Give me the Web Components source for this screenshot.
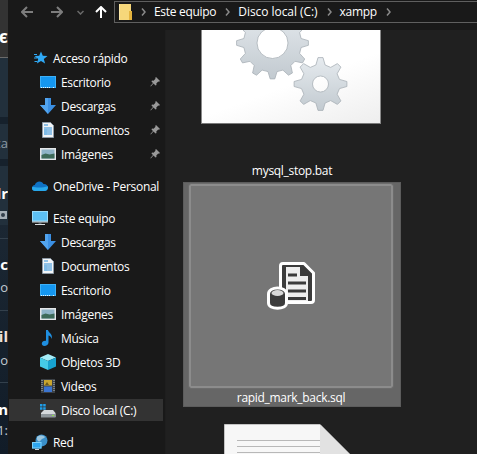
<!DOCTYPE html>
<html>
<head>
<meta charset="utf-8">
<title>xampp</title>
<style>
    html, body { margin: 0; height: 454px; overflow: hidden; background: #191919; }
    body { display: flex; font: 12px "Open Sans", "Noto Sans", sans-serif; letter-spacing: -.3px; color: #fff; }
</style>
</head>
<body>
<back-strip></back-strip>
<explorer-window>
    <nav-toolbar slot="top"></nav-toolbar>
    <side-nav slot="side"></side-nav>
    <file-pane slot="main"></file-pane>
</explorer-window>
<script>
const icons = {
    star: `<path d="M9 1.500l1.800 4.300 4.700.3-3.700 2.900 1.300 4.500L9 10.900l-4.100 2.600 1.300-4.500L2.500 6.100l4.700-.3z" fill="#2fa9f5"/><path d="M2 4.500h3M2 8h3M2.500 11.500h3" stroke="#2fa9f5" stroke-width="1.200"/>`,
    desktop: `<rect x="0" y="2" width="16" height="12" fill="#1597f0"/><rect x="0.500" y="2.500" width="15" height="11" fill="none" stroke="#3cb0f8"/><path d="M1 13.500h9M13 13.500h2" stroke="#e6f4ff" stroke-dasharray="1 1"/>`,
    download: `<path d="M5 0h6v7h5l-8 9-8-9h5z" fill="#3b8fe2"/><path d="M5 0h3v16l-8-9h5z" fill="#52a4ee"/>`,
    docs: `<path d="M2.500 0.500h8l3 3v12h-11z" fill="#f2f4f6" stroke="#8d9aa6"/><path d="M4 3h4M4 6h8M4 8h8M4 10h8M4 12h8" stroke="#2f8fd8"/><path d="M4 7h3v6H4z" fill="#7fbbe6"/>`,
    images: `<rect x="0" y="2" width="16" height="12" fill="#e4e6e8"/><rect x="1.500" y="3.500" width="13" height="9" fill="#8fb3c6"/><path d="M1.500 9l4-1.500 4 1 5-1v5h-13z" fill="#3e6a58"/>`,
    cloud: `<path d="M3.500 13C1.500 13 0 11.700 0 10c0-1.600 1.200-2.800 2.800-3C3.500 5 5.300 3.500 7.500 3.500c1.800 0 3.300.9 4 2.400 2.400-.2 4.500 1.500 4.500 3.700 0 1.900-1.500 3.400-3.500 3.400z" fill="#0f72c4"/><path d="M3 13c-1.700 0-3-1.100-3-2.800 0-.6.2-1 .4-1.400 1.500.5 4 .7 6.600.7 3.500 0 6.500-.5 8.700-1.300.2.400.3.900.3 1.400 0 1.900-1.500 3.400-3.500 3.400z" fill="#28a8ea"/>`,
    pc: `<rect x="0" y="1" width="16" height="10.500" fill="#5cc0f4"/><rect x="0.500" y="1.500" width="15" height="9.500" fill="none" stroke="#9adcfa"/><path d="M0 12h16" stroke="#d8dde0"/><path d="M6.500 12.500h3v1h-3z" fill="#8d9aa6"/><path d="M3 14.500h10" stroke="#d8dde0"/>`,
    music: `<path d="M6 0h2c.3 2.800 5 3.800 3.800 9-.5-2.200-2.300-3.200-3.300-3.400V12.500C8.500 14.700 6.500 16 4.300 16 2.800 16 1.800 15 1.800 13.600c0-1.900 2-3.200 4.200-2.800z" fill="#1f8fe0"/>`,
    cube: `<path d="M8 0l8 3.500L8 7 0 3.500z" fill="#a5ecf7"/><path d="M0 3.500L8 7v9l-8-3.500z" fill="#45cbe8"/><path d="M16 3.500L8 7v9l8-3.500z" fill="#17a2cf"/>`,
    video: `<rect x="1" y="1" width="14" height="14" fill="#3b4045"/><path d="M2 2v12M14 2v12" stroke="#b9bfc4" stroke-dasharray="1 1"/><rect x="4" y="2" width="8" height="5.500" fill="#c9a52e"/><rect x="4" y="8.500" width="8" height="5.500" fill="#3b74d0"/><path d="M5 7l2-3 2 3z" fill="#6a5a20"/>`,
    drive: `<path d="M0 2h2.500v2.500H0zM3.200 2h2.500v2.500H3.200zM0 5.200h2.500v2.500H0zM3.200 5.200h2.500v2.500H3.200z" fill="#1f9de8"/><path d="M4 8h9l2.500 3v4H1v-4z" fill="#d4d8db"/><path d="M1 12h14.500v3.500H1z" fill="#8f979c"/><path d="M12 13h2v1h-2z" fill="#8fe04a"/>`,
    network: `<circle cx="9.500" cy="6.500" r="6" fill="#3a8fc8"/><path d="M5 3c2-2 6-2 8 0-1 2-3 1-4 3s-3 2-4-.500z" fill="#9cc6de"/><rect x="0" y="8" width="9.500" height="6.500" fill="#2ea6f0"/><rect x="0.500" y="8.500" width="8.500" height="5.500" fill="none" stroke="#7fd0f8"/><path d="M3 15.500h4" stroke="#c8d0d6"/>`
}

class NavIcon extends HTMLElement {
    constructor() {
        super()
        const shadow = this.attachShadow({ mode: 'open' })
        shadow.innerHTML = `
        <style>
            :host { display: block; width: 16px; height: 16px; flex: none; }
            svg { display: block; }
        </style>
        <svg width="16" height="16" viewBox="0 0 16 16">${icons[this.getAttribute('name')]}</svg>`
    }
}
customElements.define('nav-icon', NavIcon)

class BackStrip extends HTMLElement {
    constructor() {
        super()
        const shadow = this.attachShadow({ mode: 'open' })
        shadow.innerHTML = `
        <style>
            :host { display: flex; flex-direction: column; width: 8px; height: 454px; flex: none; overflow: hidden; background: linear-gradient(#1d2935 40%, #111c28); font-family: "Open Sans", sans-serif; letter-spacing: 0; }
            div { display: flex; justify-content: flex-end; white-space: nowrap; overflow: hidden; flex: none; }
            .head { height: 58px; background: #333; border-bottom: 1px solid #6a6a6a; font-size: 17px; font-weight: 700; align-items: flex-end; line-height: 26px; padding-bottom: 7px; box-sizing: border-box; }
            .blue { background: #22303c; color: #8c99a4; }
            .bar { background: #16212c; }
            .b { font-weight: 700; font-size: 15px; color: #fff; line-height: 24px; }
            .s { font-size: 13px; color: #c4cbd2; line-height: 24px; }
            .rule { height: 1px; background: #33404c; }
        </style>
        <div class="head">&#1108;</div>
        <div class="blue" style="height:59px"></div>
        <div class="bar" style="height:7px"></div>
        <div class="blue" style="height:35px;align-items:center;font-size:13px;padding-top:2px;box-sizing:border-box">ca</div>
        <div class="bar" style="height:7px"></div>
        <div class="blue" style="height:39px;align-items:flex-end"><span class="b">dr</span></div>
        <div class="blue" style="height:20px;align-items:center"><svg width="8" height="10" viewBox="0 0 8 10"><rect x="-4" y="1" width="11" height="8" fill="#a6b0b8"/><circle cx="3" cy="5" r="2" fill="#33404c"/></svg></div>
        <div class="rule" style="margin-top:13px"></div>
        <div class="b" style="margin-top:13px;height:23px">oc</div>
        <div class="s" style="height:24px">o</div>
        <div class="rule" style="margin-top:11px"></div>
        <div class="b" style="margin-top:13px;height:24px;color:#f3e2dc">il</div>
        <div class="s" style="height:24px">o</div>
        <div class="rule" style="margin-top:10px"></div>
        <div class="b" style="margin-top:14px;height:24px">n</div>
        <div class="s" style="height:18px;line-height:18px">1:</div>`
    }
}
customElements.define('back-strip', BackStrip)

class ExplorerWindow extends HTMLElement {
    constructor() {
        super()
        const shadow = this.attachShadow({ mode: 'open' })
        shadow.innerHTML = `
        <style>
            :host { display: grid; flex: 1; min-width: 0; height: 454px; grid-template-columns: 158px 1fr; grid-template-rows: 30px 1fr; background: #191919; }
            .top { grid-column: 1 / 3; min-width: 0; overflow: hidden; }
            .side, .main { min-width: 0; min-height: 0; overflow: hidden; }
        </style>
        <div class="top"><slot name="top"></slot></div>
        <div class="side"><slot name="side"></slot></div>
        <div class="main"><slot name="main"></slot></div>`
    }
}
customElements.define('explorer-window', ExplorerWindow)

class NavToolbar extends HTMLElement {
    constructor() {
        super()
        const shadow = this.attachShadow({ mode: 'open' })
        const chevron = `<svg class="sep" width="5" height="8" viewBox="0 0 5 8"><path d="M1 .5L4 4 1 7.500" fill="none" stroke="#8a8a8a" stroke-width="1.500"/></svg>`
        shadow.innerHTML = `
        <style>
            :host { display: flex; align-items: flex-start; height: 30px; background: #191919; padding-left: 13px; }
            svg { display: block; flex: none; }
            .nav { display: flex; align-items: center; height: 24px; }
            .bar { display: flex; align-items: center; flex: none; width: 400px; height: 20px; margin: 1px 0 0 7px; border: 1px solid #5f5f5f; border-width: 1px 0 1px 1px; padding-left: 4px; color: #fff; white-space: nowrap; }
            .sep { margin: 0 8px 0 9px; }
            span { line-height: 20px; }
            .wide { letter-spacing: -.05px; }
        </style>
        <div class="nav">
            <svg width="12" height="12" viewBox="0 0 12 12"><path d="M6 1L1 6l5 5M1 6h11" fill="none" stroke="#7d7d7d" stroke-width="2"/></svg>
            <svg style="margin-left:18px" width="12" height="12" viewBox="0 0 12 12"><path d="M6 1l5 5-5 5M11 6H0" fill="none" stroke="#7d7d7d" stroke-width="2"/></svg>
            <svg style="margin-left:14px" width="7" height="5" viewBox="0 0 7 5"><path d="M.5 1l3 3 3-3" fill="none" stroke="#6a6a6a" stroke-width="1.500"/></svg>
            <svg style="margin-left:11px" width="12" height="12" viewBox="0 0 12 12"><path d="M1 6l5-5 5 5M6 1v11" fill="none" stroke="#fff" stroke-width="2"/></svg>
        </div>
        <div class="bar">
            <svg width="13" height="16" viewBox="0 0 13 16"><path d="M0 0h12v16H0z" fill="#f6d77a"/><path d="M10 7h3v9h-3z" fill="#e4b33e"/><path d="M0 0h1v16H0z" fill="#fbe7a8"/></svg>
            ${chevron}<span>Este equipo</span>${chevron}<span class="wide">Disco local (C:)</span>${chevron}<span>xampp</span>${chevron}
        </div>`
    }
}
customElements.define('nav-toolbar', NavToolbar)

class SideItem extends HTMLElement {
    constructor() {
        super()
        const shadow = this.attachShadow({ mode: 'open' })
        const pin = this.hasAttribute('pinned') ? `<svg class="pin" width="10" height="10" viewBox="0 0 10 10"><path d="M6 0l4 4-1 .8-.8-.3L6.300 6.400 6.500 8 5.500 8.500 3.500 6.500 .8 9.500 .4 9.100 3 6 1.500 4.500 2 3.500l1.600.2L5.500 1.800 5.200 1z" fill="#999"/></svg>` : ''
        shadow.innerHTML = `
        <style>
            :host { display: block; height: 24px; padding: 1px 2px 1px 1px; box-sizing: border-box; }
            .row { display: flex; align-items: center; height: 22px; padding-left: 23px; color: #fff; white-space: nowrap; }
            :host([child]) .row { padding-left: 31px; }
            :host([active]) .row { background: #333; }
            .text { margin-left: 5px; flex: 1; }
            .pin { margin-right: 3px; }
        </style>
        <div class="row"><nav-icon name="${this.getAttribute('icon')}"></nav-icon><span class="text"><slot></slot></span>${pin}</div>`
    }
}
customElements.define('side-item', SideItem)

class SideNav extends HTMLElement {
    constructor() {
        super()
        const shadow = this.attachShadow({ mode: 'open' })
        shadow.innerHTML = `
        <style>
            :host { display: flex; flex-direction: column; gap: 8px; height: 424px; padding-top: 16px; box-sizing: border-box; background: #191919; border-right: 1px solid #1e1e1e; }
            section { display: block; }
        </style>
        <section>
            <side-item icon="star">Acceso rápido</side-item>
            <side-item child pinned icon="desktop">Escritorio</side-item>
            <side-item child pinned icon="download">Descargas</side-item>
            <side-item child pinned icon="docs">Documentos</side-item>
            <side-item child pinned icon="images">Imágenes</side-item>
        </section>
        <section>
            <side-item icon="cloud">OneDrive - Personal</side-item>
        </section>
        <section>
            <side-item icon="pc">Este equipo</side-item>
            <side-item child icon="download">Descargas</side-item>
            <side-item child icon="docs">Documentos</side-item>
            <side-item child icon="desktop">Escritorio</side-item>
            <side-item child icon="images">Imágenes</side-item>
            <side-item child icon="music">Música</side-item>
            <side-item child icon="cube">Objetos 3D</side-item>
            <side-item child icon="video">Videos</side-item>
            <side-item child active icon="drive">Disco local (C:)</side-item>
        </section>
        <section>
            <side-item icon="network">Red</side-item>
        </section>`
    }
}
customElements.define('side-nav', SideNav)

// gear outline as a polygon, teeth spread evenly round the centre
function gearPath(cx, cy, outer, inner, hole, teeth) {
    const step = Math.PI * 2 / teeth
    const pts = []
    for (let i = 0; i < teeth; i++) {
        const a = i * step - Math.PI / 2
        const pairs = [[inner, -0.3], [outer, -0.12], [outer, 0.12], [inner, 0.3]]
        pairs.forEach(([r, f]) => {
            pts.push((cx + r * Math.cos(a + f * step)).toFixed(1) + ' ' + (cy + r * Math.sin(a + f * step)).toFixed(1))
        })
    }
    return `M${pts.join('L')}Z M${cx - hole} ${cy}a${hole} ${hole} 0 1 0 ${hole * 2} 0a${hole} ${hole} 0 1 0 ${-hole * 2} 0Z`
}

class GearCard extends HTMLElement {
    constructor() {
        super()
        const shadow = this.attachShadow({ mode: 'open' })
        shadow.innerHTML = `
        <style>
            :host { display: block; width: 180px; height: 94px; box-sizing: border-box; overflow: hidden; background: linear-gradient(160deg, #fff 55%, #eee); border-bottom: 1px solid #7a7a7a; border-left: 1px solid #8a8a8a; border-right: 1px solid #8a8a8a; }
            svg { display: block; }
        </style>
        <svg width="180" height="94" viewBox="0 0 180 94">
            <defs><linearGradient id="g" x1="0" y1="0" x2="0" y2="1"><stop offset="0" stop-color="#e6ebef"/><stop offset="1" stop-color="#c2cad0"/></linearGradient></defs>
            <path d="${gearPath(70.500, 13, 36, 29, 15.500, 12)}" fill="url(#g)" fill-rule="evenodd" stroke="#a8b0b6" stroke-width=".8"/>
            <path d="${gearPath(118.500, 54, 26.500, 19.500, 8, 8)}" fill="url(#g)" fill-rule="evenodd" stroke="#a8b0b6" stroke-width=".8"/>
        </svg>`
    }
}
customElements.define('gear-card', GearCard)

class SqlTile extends HTMLElement {
    constructor() {
        super()
        const shadow = this.attachShadow({ mode: 'open' })
        shadow.innerHTML = `
        <style>
            :host { display: block; width: 218px; height: 225px; box-sizing: border-box; background: #666; border: 1px solid #5c5c5c; padding: 1px 7px 0 5px; }
            .frame { display: flex; align-items: center; justify-content: center; height: 204px; box-sizing: border-box; background: #767676; border: 2px solid #8c8c8c; outline: 1px solid #6c6c6c; border-radius: 2px; }
            svg { display: block; }
            .label { text-align: center; color: #fff; line-height: 18px; margin-top: 1px; }
        </style>
        <div class="frame">
            <svg width="48" height="48" viewBox="0 0 48 48">
                <path d="M13.500 4q0-2.500 2.500-2.500H37L46.500 11V38q0 2.500-2.500 2.500H16q-2.500 0-2.500-2.500z" fill="#3b3b3b" stroke="#fff" stroke-width="3" stroke-linejoin="round"/>
                <path d="M19 5h14v9h8v25H19z" fill="#eee"/>
                <path d="M21 13h9M21 21h18M21 29h18M21 36.500h18" stroke="#3b3b3b" stroke-width="3"/>
                <path d="M1.500 32c0-8 18-8 18 0v9c0 7-18 7-18 0z" fill="#3b3b3b" stroke="#fff" stroke-width="3" stroke-linejoin="round"/>
                <ellipse cx="10.500" cy="31" rx="6" ry="3" fill="#d8d8d8"/>
            </svg>
        </div>
        <div class="label"><slot></slot></div>`
    }
}
customElements.define('sql-tile', SqlTile)

class PageCard extends HTMLElement {
    constructor() {
        super()
        const shadow = this.attachShadow({ mode: 'open' })
        shadow.innerHTML = `
        <style>
            :host { display: block; width: 136px; height: 30px; overflow: hidden; flex: none; }
            svg { display: block; }
        </style>
        <svg width="136" height="30" viewBox="0 0 136 30">
            <path d="M.5.5H96l40 40H.5z" fill="#f7f7f7" stroke="#c4c4c4"/>
            <path d="M96 .5v40h40z" fill="#e2e2e2"/>
            <path d="M13 16.500h83M13 22.500h83M13 28.500h83" stroke="#b8b8b8"/>
        </svg>`
    }
}
customElements.define('page-card', PageCard)

class FilePane extends HTMLElement {
    constructor() {
        super()
        const shadow = this.attachShadow({ mode: 'open' })
        shadow.innerHTML = `
        <style>
            :host { display: flex; flex-direction: column; align-items: center; width: 218px; height: 424px; padding-left: 17px; padding-right: 94px; background: #202020; overflow: hidden; }
            gear-card { align-self: flex-start; margin-left: 18px; }
            .name { margin-top: 37px; height: 21px; line-height: 20px; color: #fff; }
            page-card { align-self: flex-start; margin-left: 41px; margin-top: 17px; }
        </style>
        <gear-card></gear-card>
        <div class="name">mysql_stop.bat</div>
        <sql-tile>rapid_mark_back.sql</sql-tile>
        <page-card></page-card>`
    }
}
customElements.define('file-pane', FilePane)
</script>
</body>
</html>
